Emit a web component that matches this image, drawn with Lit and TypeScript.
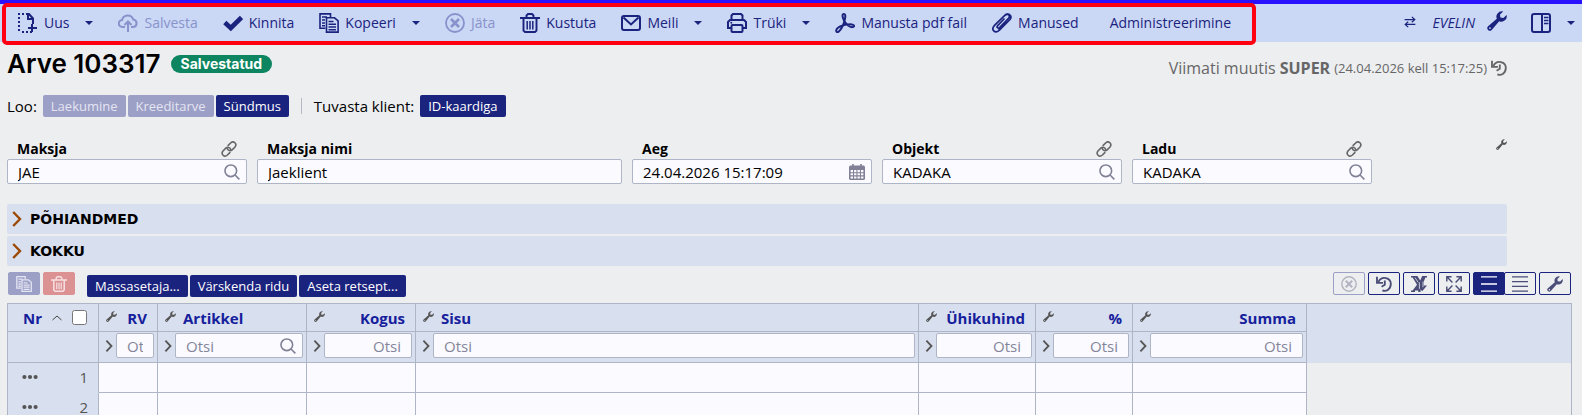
import { LitElement, html, css, svg, nothing } from "lit";
import { customElement, property } from "lit/decorators.js";
import { classMap } from "lit/directives/class-map.js";

const wrench = svg`<path fill="currentColor" fill-rule="evenodd" d="M16.2.5 13 3.6l.4 3 3 .4L19.600 3.900a5.400 5.400 0 0 1-7.400 6.300L4.700 18.900a2.500 2.500 0 0 1-3.600-3.600L9.800 7.800A5.400 5.400 0 0 1 16.200.5ZM3 16.200a.9.9 0 1 0 0 1.800.9.9 0 0 0 0-1.800Z"/>`;

const icons = {
  create: svg`<g fill="none" stroke="currentColor" stroke-width="2"><path stroke-dasharray="2 2" d="M1 0v20M4 19h10M4 1h5"/><path d="M9 1h2l4 4.500V11M10 1v5h5M14 11v8M10 15h9"/></g>`,
  cloud: svg`<g fill="none" stroke="currentColor" stroke-width="2"><path d="M7 14H4.500a3.500 3.500 0 0 1-.4-7A5.800 5.800 0 0 1 15.200 6.500 3.800 3.800 0 0 1 15.500 14H13"/><path d="M10 19V9M6.500 12 10 8.500 13.500 12"/></g>`,
  check: svg`<path fill="none" stroke="currentColor" stroke-width="4.600" d="m1.800 9.500 6 5.500L18.500 4.500"/>`,
  copy: svg`<g fill="none" stroke="currentColor" stroke-width="1.600"><path d="M6.500 15.200H1V.9h10.500v3"/><path d="M7.500 4.800h8l3.600 3v11.300H7.500z"/><path d="M3 4h5M3 7h3M3 10h3M3 12.800h3M9.500 8.500h5M9.500 11.300H17M9.500 14H17M9.500 16.700H17"/></g>`,
  cancel: svg`<g fill="none" stroke="currentColor"><circle cx="10" cy="10" r="9" stroke-width="1.800"/><path stroke-width="2.600" d="m6 6 8 8M14 6l-8 8"/></g>`,
  trash: svg`<g fill="none" stroke="currentColor" stroke-width="1.900"><path d="M0 5h20M6.500 4.500V2.500L8 1h4l1.500 1.500v2M3.500 5v12.500L5 19h10l1.500-1.500V5"/><path d="M7.200 8v8.500M10 8v8.500M12.800 8v8.500" stroke-width="1.500"/></g>`,
  mail: svg`<g fill="none" stroke="currentColor" stroke-width="2"><rect x="1" y="3" width="18" height="14" rx="2"/><path d="m2.500 4.500 7.500 7 7.500-7"/></g>`,
  print: svg`<g fill="none" stroke="currentColor" stroke-width="2"><path d="M4.500 7V2.500L6 1h8l1.500 1.500V7M4.500 15H1V9l2-2h14l2 2v6h-3.500"/><rect x="4.500" y="12" width="11" height="7" rx="1"/></g><circle cx="4.300" cy="9.800" r="1" fill="currentColor"/>`,
  pdf: svg`<path fill="none" stroke="currentColor" stroke-width="2" stroke-linejoin="round" d="M9 1C6.800 1 7.300 4.300 9 7.500c1.600 3.400 5.500 7 8.500 6.600 2.800-.5 1.500-3-2.500-2.900-4.500.2-9.500 1.600-12 3.600-3.200 2.600-1.500 5.700.8 3.700C6.500 16 8.800 11 9.800 6.500 10.500 3.500 10.700 1 9 1Z"/>`,
  clip: svg`<path fill="none" stroke="currentColor" stroke-width="1.700" stroke-linecap="round" d="m12 6-6.300 6.600c-1.500 1.700.3 3.400 1.900 1.900l8.700-8.800c2.900-3.200-.7-6-3.500-3.400L3 11.800c-5 5.200.2 9.400 4.400 5.400L18 6.500c2.500-3-1-7-4.500-4.500M14 9l-7 7"/>`,
  swap: svg`<path fill="none" stroke="currentColor" stroke-width="2" d="M1 6h17M13 1.500 18 6l-5 4.500M19 14H2M7 9.500 2 14l5 4.500"/>`,
  panel: svg`<g fill="none" stroke="currentColor" stroke-width="2"><rect x="1" y="1" width="18" height="18" rx="2"/><path d="M11 1v18"/><path stroke-width="1.500" d="M13 4.500h4.500M13 7.500h4.500M13 10.500h4.500"/></g>`,
  history: svg`<g fill="none" stroke="currentColor" stroke-width="2.300"><path d="M3 7.500C7-1 19 2 18.500 10.500 18 17 12.500 20 8 18"/><path d="M1.200 1v7.500h7.500M11 5.500V11l-4 2.500"/></g>`,
  link: svg`<g fill="none" stroke="currentColor" stroke-width="2" stroke-linecap="round"><path d="m9 5.500 3-3c4-3.600 8.500 1.200 5.500 5L14 11c-2.500 2.200-5.500.8-6.200-1.500"/><path d="m11 14.500-3 3c-4 3.600-8.500-1.200-5.500-5L6 9c2.500-2.200 5.500-.8 6.200 1.500"/></g>`,
  search: svg`<g fill="none" stroke="currentColor" stroke-width="2"><circle cx="8.500" cy="8.500" r="7.300"/><path d="m13.800 13.800 5.400 5.400"/></g>`,
  calendar: svg`<path fill="currentColor" fill-rule="evenodd" d="M4 0h2v2h8V0h2v2h2a2 2 0 0 1 2 2v14a2 2 0 0 1-2 2H2a2 2 0 0 1-2-2V4a2 2 0 0 1 2-2h2ZM2 7.500v2.700h3V7.500Zm4.300 0v2.700h3V7.500Zm4.300 0v2.700h3V7.500Zm4.300 0v2.700H18V7.500ZM2 11.500v2.700h3v-2.700Zm4.300 0v2.700h3v-2.700Zm4.300 0v2.700h3v-2.700Zm4.300 0v2.700H18v-2.700ZM2 15.500v2.700h3v-2.700Zm4.300 0v2.700h3v-2.700Zm4.300 0v2.700h3v-2.700Zm4.300 0v2.700H18v-2.700Z"/>`,
  chevron: svg`<path fill="none" stroke="currentColor" stroke-width="3" d="M4 1.200 12.500 10 4 18.800"/>`,
  up: svg`<path fill="none" stroke="currentColor" stroke-width="2" d="m1 14 9-8 9 8"/>`,
  dots: svg`<g fill="currentColor"><circle cx="3" cy="10" r="2.600"/><circle cx="10" cy="10" r="2.600"/><circle cx="17" cy="10" r="2.600"/></g>`,
  excel: svg`<path fill="currentColor" d="M0 0h8l3.500 5.500L14 0h6v2h-2l-2 5v5h4l-6 7-2-2v3H9v-2l-4 0v2H0v-2h2l5.500-7L2 2H0z"/><path stroke="#edeef0" stroke-width="1" fill="none" d="M10.500 8v8M5 2l4 6M15 7v7"/>`,
  expand: svg`<g fill="none" stroke="currentColor" stroke-width="1.800"><path d="M1 7V1h6M13 1h6v6M19 13v6h-6M7 19H1v-6M2 2l6 6M18 2l-6 6M18 18l-6-6M2 18l6-6"/></g>`,
  rows3: svg`<path stroke="currentColor" stroke-width="1.600" d="M0 1h20M0 10h20M0 19h20"/>`,
  rows4: svg`<path stroke="currentColor" stroke-width="1.600" d="M0 1h20M0 7h20M0 13h20M0 19h20"/>`,
  wrench,
};
type IconName = keyof typeof icons;

@customElement("ui-icon")
export class UiIcon extends LitElement {
  static styles = css`
    :host { display: inline-flex; flex: none; width: 16px; height: 16px; }
    svg { display: block; width: 100%; height: 100%; }
  `;
  @property() name: IconName = "wrench";
  render() {
    return html`<svg viewBox="0 0 20 20" aria-hidden="true">${icons[this.name]}</svg>`;
  }
}

interface Action { label: string; icon?: IconName; menu?: boolean; disabled?: boolean }
const actions: Action[] = [
  { label: "Uus", icon: "create", menu: true },
  { label: "Salvesta", icon: "cloud", disabled: true },
  { label: "Kinnita", icon: "check" },
  { label: "Kopeeri", icon: "copy", menu: true },
  { label: "Jäta", icon: "cancel", disabled: true },
  { label: "Kustuta", icon: "trash" },
  { label: "Meili", icon: "mail", menu: true },
  { label: "Trüki", icon: "print", menu: true },
  { label: "Manusta pdf fail", icon: "pdf" },
  { label: "Manused", icon: "clip" },
  { label: "Administreerimine" },
];

interface Field { id: string; label: string; value: string; icon?: IconName; link?: boolean; wide?: boolean }
const fields: Field[] = [
  { id: "payer", label: "Maksja", value: "JAE", icon: "search", link: true },
  { id: "payer-name", label: "Maksja nimi", value: "Jaeklient", wide: true },
  { id: "time", label: "Aeg", value: "24.04.2026 15:17:09", icon: "calendar" },
  { id: "object", label: "Objekt", value: "KADAKA", icon: "search", link: true },
  { id: "stock", label: "Ladu", value: "KADAKA", icon: "search", link: true },
];

interface Column { label: string; width: number; end?: boolean; search?: boolean }
const columns: Column[] = [
  { label: "RV", width: 59, end: true },
  { label: "Artikkel", width: 149, search: true },
  { label: "Kogus", width: 109, end: true },
  { label: "Sisu", width: 503 },
  { label: "Ühikuhind", width: 117, end: true },
  { label: "%", width: 97, end: true },
  { label: "Summa", width: 174, end: true },
];

@customElement("app-root")
export class AppRoot extends LitElement {
  static styles = css`
    :host {
      display: flex; flex-direction: column; position: relative;
      height: 100vh; overflow: hidden;
      background: #edeef0; color: #000;
      font: 15px/20px "Open Sans", "Noto Sans", sans-serif;
      --navy: #1a237e; --line: #adb5c6; --band: #d8dfee; --paper: #fafaff;
    }
    * { box-sizing: border-box; }
    button, input { font: inherit; color: inherit; margin: 0; }
    button { border: 0; background: none; padding: 0; cursor: pointer; }
    button:disabled { cursor: default; }

    .toolbar {
      display: flex; align-items: center; flex: none; height: 42px;
      border-top: 4px solid #2b12ff; background: #cad7f5; color: var(--navy);
      padding: 0 7px 0 6px; font-size: 14px;
    }
    .action { display: flex; align-items: center; gap: 6px; padding: 0 13px 0 12px; white-space: nowrap; }
    .action:disabled { color: #8893cc; }
    .action.plain { padding-left: 18px; }
    .action ui-icon, .side ui-icon { width: 20px; height: 20px; }
    .caret { border: 4px solid transparent; border-top-color: currentColor; border-bottom: 0; }
    .action .caret { margin-left: 10px; }
    .side { display: flex; align-items: center; margin-left: auto; }
    .side .swap { width: 12px; height: 12px; }
    .user { margin: 0 12px 0 16px; font-style: italic; font-size: 14px; color: var(--navy); text-decoration: none; }
    .panel { display: flex; align-items: center; gap: 16px; margin-left: 24px; }
    .highlight {
      position: absolute; top: 3px; left: 2px; width: 1254px; height: 42px;
      border: 4px solid #ff0010; border-radius: 5px; pointer-events: none;
    }

    .document { display: flex; flex-direction: column; flex: none; padding: 0 75px 0 7px; }
    .heading { display: flex; align-items: center; height: 44px; }
    h1 { margin: 0; font: 600 26px/28px Inter, sans-serif; }
    .badge {
      margin-left: 10px; padding: 0 10px; border-radius: 9px; background: #0c8560; color: #fff;
      font: 700 14px/18px Inter, sans-serif;
    }
    .modified { display: flex; align-items: center; gap: 4px; margin-left: auto; padding-top: 7px; color: #666; font-size: 16px; }
    .modified small { font-size: 13px; }
    .quick { display: flex; align-items: center; height: 22px; margin-top: 9px; }
    .solid {
      height: 22px; padding: 1px 8px 0; border-radius: 2px; background: var(--navy); color: #fff;
      font-size: 13px; line-height: 21px; white-space: nowrap;
    }
    .solid:disabled { background: #9c9fc6; color: #e4e5f2; }
    .quick-set { display: flex; gap: 2px; margin-left: 6px; }
    .rule { width: 1px; height: 16px; margin: 0 12px; background: #b4b8c2; }

    .fields { display: flex; gap: 10px; margin-top: 22px; }
    .field { flex: none; width: 240px; }
    .field.wide { width: 365px; }
    .field-head { display: flex; align-items: center; justify-content: space-between; height: 20px; padding: 0 10px; }
    .field-head label { font-weight: 700; font-size: 14px; }
    .field-head ui-icon { color: #666; }
    .fields > .tune { margin-left: auto; color: #555; align-self: flex-start; }
    .tune ui-icon, ui-icon.tune { width: 11px; height: 11px; }
    .tune { display: flex; }
    .box {
      display: flex; align-items: center; height: 25px; padding: 0 6px 0 10px;
      border: 1px solid var(--line); border-radius: 2px; background: var(--paper);
    }
    .box input { flex: 1; min-width: 0; width: 0; border: 0; padding: 0; background: none; outline: 0; height: 23px; }
    .box input::placeholder { color: #85859a; opacity: 1; }
    .box ui-icon { color: #808096; }
    .sections { display: flex; flex-direction: column; gap: 2px; margin-top: 20px; }
    .section {
      display: flex; align-items: center; gap: 4px; height: 30px; padding-left: 3px;
      border-radius: 2px; background: var(--band); font: 700 14px/20px "DejaVu Sans", sans-serif; text-align: left;
    }
    .section ui-icon { color: #9c4a05; }

    .grid-tools { display: flex; flex: none; gap: 3px; padding: 6px 11px 0 8px; height: 37px; }
    .tool {
      display: flex; align-items: center; justify-content: center; width: 32px; height: 23px;
      border: 1px solid var(--navy); border-radius: 2px; color: #4b4d78;
    }
    .tool.copy { background: #9c9fc6; border-color: #9c9fc6; color: #e4e5f2; }
    .tool.drop { background: #dc9193; border-color: #dc9193; color: #f6dfe3; }
    .tool.off { border-color: #9c9fc6; color: #b3b4c2; }
    .tool.on { background: var(--navy); color: #fff; }
    .bulk { display: flex; gap: 2px; margin: 3px auto 0 9px; }
    .pair { display: flex; }
    .pair .tool + .tool { margin-left: -1px; }

    .grid { flex: 1; min-height: 0; margin: 0 10px 0 7px; border: 1px solid var(--line); border-bottom: 0; overflow: hidden; }
    table { width: 100%; table-layout: fixed; border-collapse: separate; border-spacing: 0; }
    th, td { padding: 0; border-right: 1px solid var(--line); border-bottom: 1px solid var(--line); }
    th, .filters td, .row-head { background: var(--band); }
    th { height: 28px; color: #16209c; font-size: 15px; font-weight: 700; text-align: left; }
    .filters td { height: 31px; }
    tbody td { height: 30px; background: var(--paper); }
    tbody .row-head { border-bottom-color: var(--band); font-weight: 400; color: #555; height: 30px; }
    th.rest, .filters .rest, tbody .rest { border: 0; }
    tbody .rest { background: none; }
    .head { display: flex; align-items: center; justify-content: space-between; gap: 7px; padding: 0 10px 0 7px; }
    .head.start { justify-content: flex-start; }
    .head .tune { color: #555; align-self: flex-start; margin-top: 3px; }
    .number { display: flex; align-items: center; padding: 0 11px 0 15px; }
    .number ui-icon { width: 10px; height: 10px; margin-left: 10px; color: #444; }
    .number input { width: 15px; height: 15px; margin-left: auto; }
    .filter { display: flex; align-items: center; padding: 0 3px 3px 5px; }
    .filter > button { display: flex; }
    .filter > button ui-icon { width: 12px; height: 12px; color: #555; }
    .filter .box { flex: 1; min-width: 0; }
    .filter.end .box { padding-right: 10px; }
    .filter.end input { text-align: right; }
    .row-line { display: flex; align-items: center; justify-content: space-between; height: 28px; margin-bottom: 1px; padding: 0 10px 0 14px; line-height: 18px; }
    .row-line button { display: flex; }
  `;

  private action(a: Action) {
    return html`<button class=${classMap({ action: true, plain: !a.icon })} ?disabled=${a.disabled}>
      ${a.icon ? html`<ui-icon name=${a.icon}></ui-icon>` : nothing}<span>${a.label}</span>
      ${a.menu ? html`<span class="caret"></span>` : nothing}
    </button>`;
  }

  private field(f: Field) {
    return html`<div class=${classMap({ field: true, wide: !!f.wide })}>
      <div class="field-head">
        <label for=${f.id}>${f.label}</label>
        ${f.link ? html`<ui-icon name="link"></ui-icon>` : nothing}
      </div>
      <div class="box">
        <input id=${f.id} .value=${f.value} />
        ${f.icon ? html`<ui-icon name=${f.icon}></ui-icon>` : nothing}
      </div>
    </div>`;
  }

  private tool(icon: IconName, label: string, kind = "", disabled = false) {
    return html`<button class="tool ${kind}" aria-label=${label} ?disabled=${disabled}><ui-icon name=${icon}></ui-icon></button>`;
  }

  private row(n: number) {
    return html`<tr>
      <th class="row-head" scope="row">
        <div class="row-line"><button aria-label="Rea ${n} menüü"><ui-icon name="dots"></ui-icon></button><span>${n}</span></div>
      </th>
      ${columns.map(() => html`<td></td>`)}
      <td class="rest"></td>
    </tr>`;
  }

  render() {
    return html`
      <nav class="toolbar">
        ${actions.map((a) => this.action(a))}
        <div class="side">
          <button aria-label="Vaheta"><ui-icon class="swap" name="swap"></ui-icon></button>
          <a class="user" href="#">EVELIN</a>
          <button aria-label="Seaded"><ui-icon name="wrench"></ui-icon></button>
          <button class="panel" aria-label="Paneel"><ui-icon name="panel"></ui-icon><span class="caret"></span></button>
        </div>
      </nav>
      <div class="highlight"></div>

      <main class="document">
        <header class="heading">
          <h1>Arve 103317</h1>
          <span class="badge">Salvestatud</span>
          <div class="modified">
            <span>Viimati muutis</span><b>SUPER</b><small>(24.04.2026 kell 15:17:25)</small>
            <ui-icon name="history"></ui-icon>
          </div>
        </header>
        <div class="quick">
          <span>Loo:</span>
          <div class="quick-set">
            <button class="solid" disabled>Laekumine</button>
            <button class="solid" disabled>Kreeditarve</button>
            <button class="solid">Sündmus</button>
          </div>
          <span class="rule"></span>
          <span>Tuvasta klient:</span>
          <div class="quick-set"><button class="solid">ID-kaardiga</button></div>
        </div>
        <form class="fields">
          ${fields.map((f) => this.field(f))}
          <button type="button" class="tune" aria-label="Väljade seaded"><ui-icon name="wrench"></ui-icon></button>
        </form>
        <div class="sections">
          ${["PÕHIANDMED", "KOKKU"].map((s) => html`<button class="section"><ui-icon name="chevron"></ui-icon><span>${s}</span></button>`)}
        </div>
      </main>

      <div class="grid-tools">
        ${this.tool("copy", "Kopeeri read", "copy", true)}
        ${this.tool("trash", "Kustuta read", "drop", true)}
        <div class="bulk">
          <button class="solid">Massasetaja...</button>
          <button class="solid">Värskenda ridu</button>
          <button class="solid">Aseta retsept...</button>
        </div>
        ${this.tool("cancel", "Tühista", "off", true)}
        ${this.tool("history", "Ajalugu")}
        ${this.tool("excel", "Excel")}
        ${this.tool("expand", "Laienda")}
        <div class="pair">${this.tool("rows3", "Hõre", "on")}${this.tool("rows4", "Tihe")}</div>
        ${this.tool("wrench", "Tabeli seaded")}
      </div>

      <div class="grid">
        <table>
          <colgroup>
            <col style="width:91px" />
            ${columns.map((c) => html`<col style="width:${c.width}px" />`)}
            <col />
          </colgroup>
          <thead>
            <tr>
              <th scope="col"><div class="number"><span>Nr</span><ui-icon name="up"></ui-icon><input type="checkbox" aria-label="Vali kõik" /></div></th>
              ${columns.map((c) => html`<th scope="col">
                <div class=${classMap({ head: true, start: !c.end })}><ui-icon class="tune" name="wrench"></ui-icon><span>${c.label}</span></div>
              </th>`)}
              <th class="rest"></th>
            </tr>
            <tr class="filters">
              <td></td>
              ${columns.map((c) => html`<td>
                <div class=${classMap({ filter: true, end: !!c.end })}>
                  <button aria-label="Filter"><ui-icon name="chevron"></ui-icon></button>
                  <div class="box">
                    <input placeholder="Otsi" aria-label="Otsi: ${c.label}" />
                    ${c.search ? html`<ui-icon name="search"></ui-icon>` : nothing}
                  </div>
                </div>
              </td>`)}
              <td class="rest"></td>
            </tr>
          </thead>
          <tbody>${[1, 2].map((n) => this.row(n))}</tbody>
        </table>
      </div>
    `;
  }
}
